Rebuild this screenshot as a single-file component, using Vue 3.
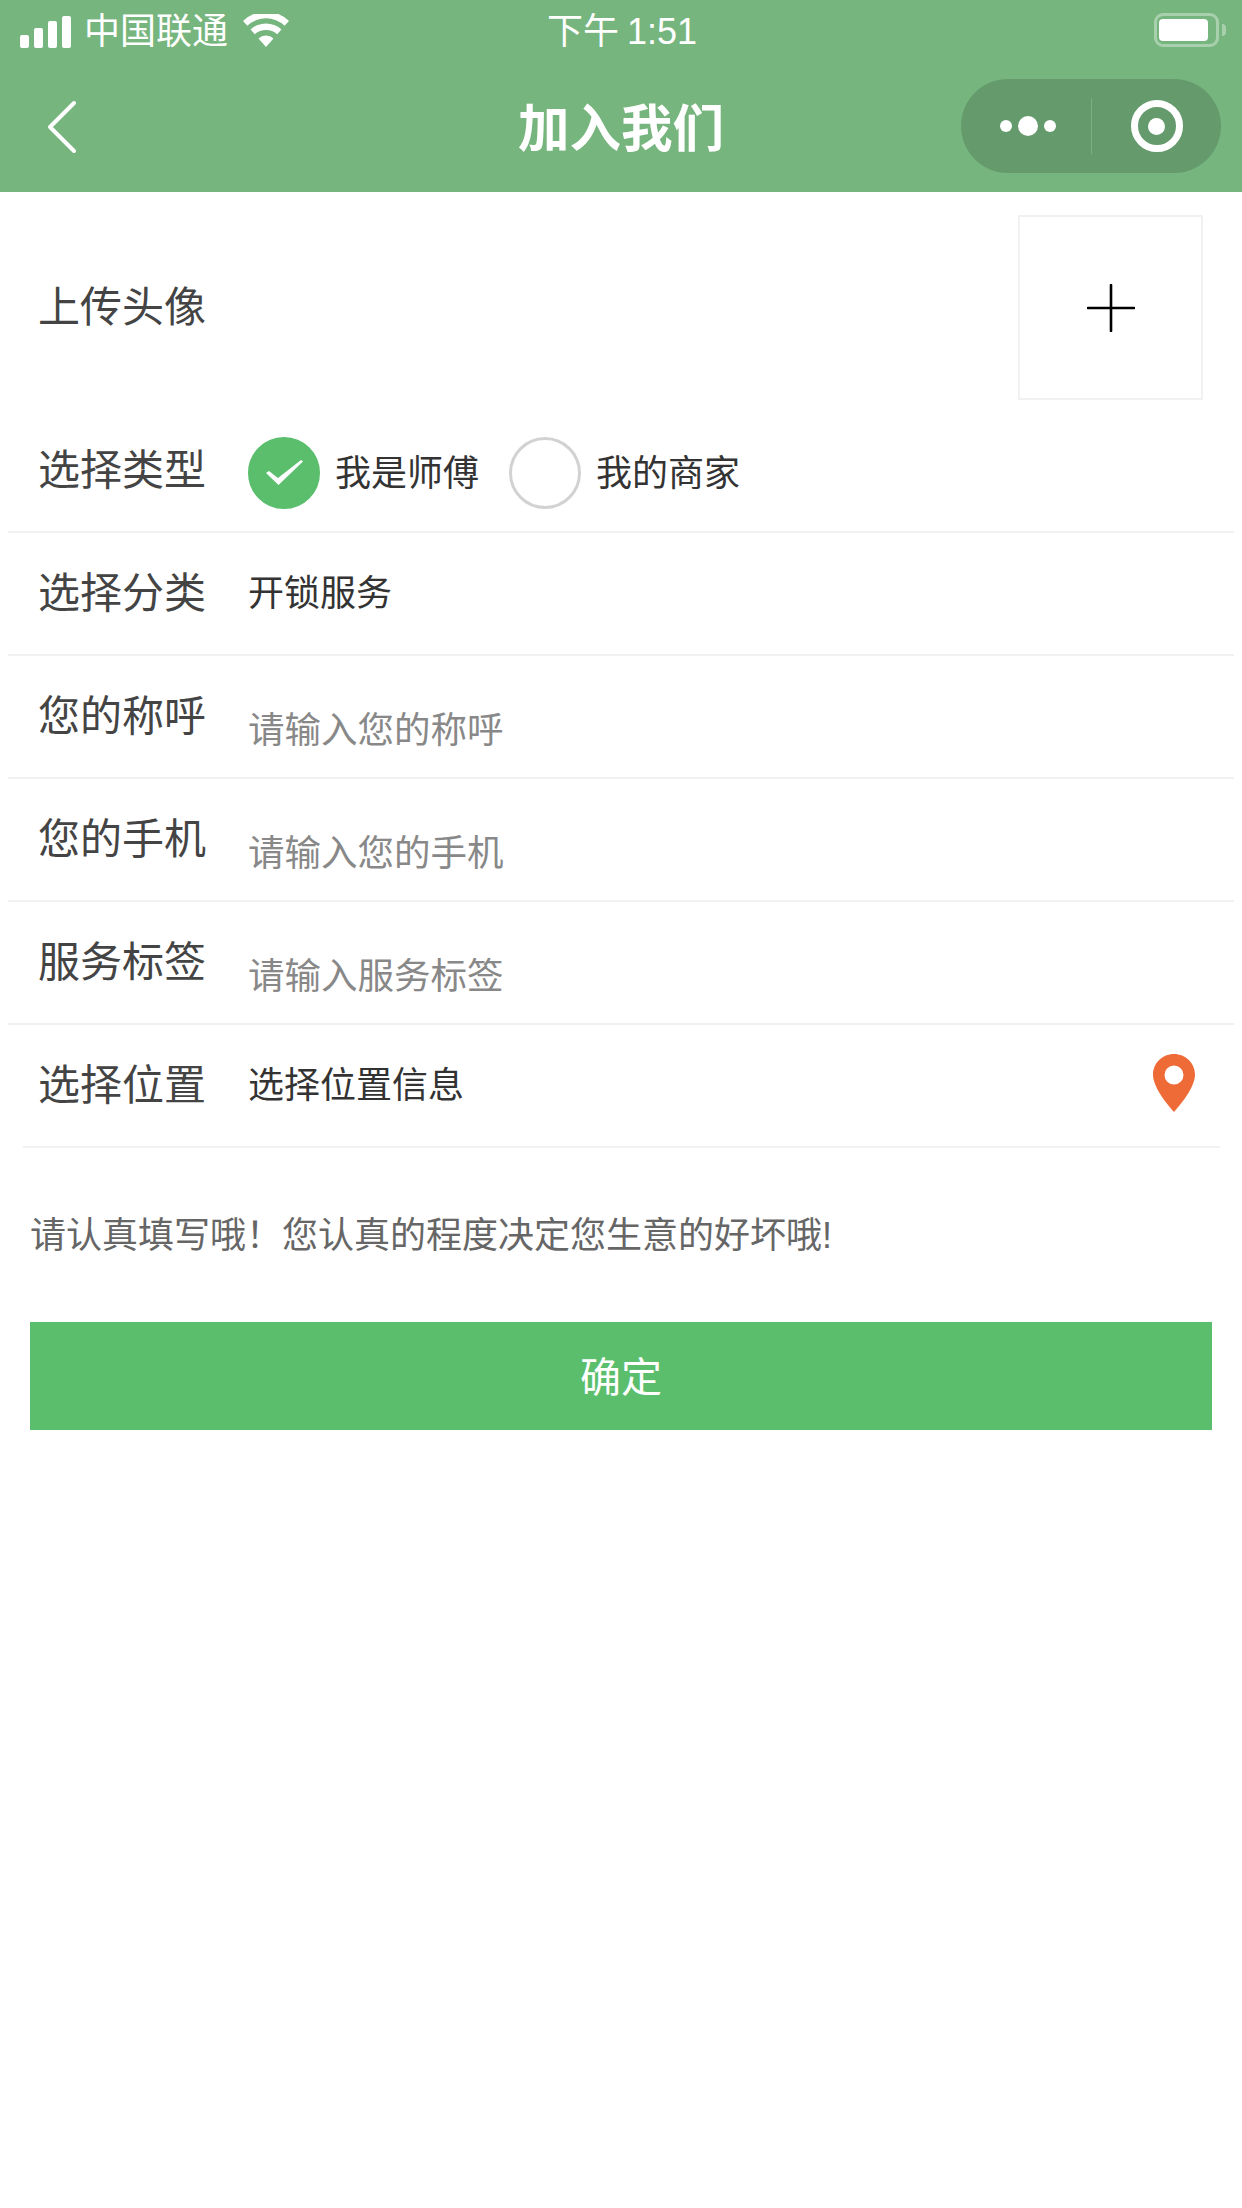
<template>
  <div class="page">
    <header class="top">
      <div class="status">
        <div class="status-left">
          <div class="signal">
            <i v-for="h in barras" :key="h" :style="{ height: h + 'px' }"></i>
          </div>
          <span class="carrier">中国联通</span>
          <svg class="wifi" width="46" height="33" viewBox="0 0 46 33">
            <path d="M23 33 L15.5 24.5 A11 11 0 0 1 30.5 24.5 Z" fill="#fff" />
            <path d="M11.8 20.2 L7.6 15.5 A23 23 0 0 1 38.4 15.5 L34.2 20.2 A17 17 0 0 0 11.8 20.2 Z" fill="#fff" />
            <path d="M4.4 11.8 L0 7 A33 33 0 0 1 46 7 L41.6 11.8 A27 27 0 0 0 4.4 11.8 Z" fill="#fff" />
          </svg>
        </div>
        <span class="time">下午 1:51</span>
        <div class="battery">
          <div class="battery-body"><div class="battery-fill"></div></div>
          <div class="battery-nub"></div>
        </div>
      </div>
      <div class="nav">
        <svg class="back" width="32" height="54" viewBox="0 0 32 54">
          <path d="M28 3 L4 27 L28 51" fill="none" stroke="#fff" stroke-width="4" stroke-linecap="round" stroke-linejoin="round" />
        </svg>
        <h1 class="title">加入我们</h1>
        <div class="capsule">
          <div class="capsule-dots">
            <i class="dot"></i><i class="dot big"></i><i class="dot"></i>
          </div>
          <div class="capsule-line"></div>
          <div class="capsule-target"><div class="ring"><i></i></div></div>
        </div>
      </div>
    </header>

    <main class="form">
      <div class="row upload">
        <span class="label">上传头像</span>
        <div class="upload-box">
          <svg width="48" height="48" viewBox="0 0 48 48">
            <path d="M1 24 H47 M24 1 V47" stroke="#000" stroke-width="2.6" stroke-linecap="round" />
          </svg>
        </div>
      </div>

      <div class="row line">
        <span class="label">选择类型</span>
        <div class="radios">
          <div v-for="t in tipus" :key="t.text" class="radio">
            <span class="circle" :class="{ on: t.actiu }">
              <svg v-if="t.actiu" width="37" height="25" viewBox="0 0 37 25">
                <path d="M0 13 L3 11 L12 18 L35 0 L37 1.5 L12.5 25 Z" fill="#fff" />
              </svg>
            </span>
            <span class="value">{{ t.text }}</span>
          </div>
        </div>
      </div>

      <div class="row line">
        <span class="label">选择分类</span>
        <span class="value">开锁服务</span>
      </div>

      <div v-for="c in camps" :key="c.label" class="row line">
        <span class="label">{{ c.label }}</span>
        <span class="placeholder">{{ c.placeholder }}</span>
      </div>

      <div class="row line last">
        <span class="label">选择位置</span>
        <span class="value grow">选择位置信息</span>
        <svg class="pin" width="42" height="58" viewBox="0 0 42 58">
          <path fill-rule="evenodd" fill="#ee6a37" d="M21 0 C32.6 0 42 9.2 42 20.6 C42 33 29 49 21 58 C13 49 0 33 0 20.6 C0 9.2 9.4 0 21 0 Z M21 11.5 A9.5 9.5 0 1 0 21 30.5 A9.5 9.5 0 1 0 21 11.5 Z" />
        </svg>
      </div>

      <p class="hint">请认真填写哦！您认真的程度决定您生意的好坏哦!</p>
      <button class="confirm">确定</button>
    </main>
  </div>
</template>

<script setup>
const barras = [13, 20, 27, 32]

const tipus = [
  { text: '我是师傅', actiu: true },
  { text: '我的商家', actiu: false },
]

const camps = [
  { label: '您的称呼', placeholder: '请输入您的称呼' },
  { label: '您的手机', placeholder: '请输入您的手机' },
  { label: '服务标签', placeholder: '请输入服务标签' },
]
</script>

<style>
body {
  background: #fff;
}
</style>

<style scoped>
.page {
  width: 1242px;
  height: 2208px;
  background: #fff;
  font-family: "Liberation Sans", "Noto Sans CJK SC", sans-serif;
  overflow: hidden;
}

.top {
  height: 192px;
  background: #77b57f;
  color: #fff;
}

.status {
  height: 64px;
  display: flex;
  align-items: center;
  justify-content: space-between;
  padding: 0 16px 0 20px;
  position: relative;
}

.status-left {
  display: flex;
  align-items: center;
}

.signal {
  display: flex;
  align-items: flex-end;
  gap: 5px;
  height: 32px;
}

.signal i {
  width: 9px;
  background: #fff;
  border-radius: 2px;
}

.carrier {
  font-size: 36px;
  line-height: 40px;
  margin-left: 13px;
}

.wifi {
  margin-left: 15px;
  margin-top: -4px;
}

.time {
  position: absolute;
  left: 547px;
  top: 12px;
  font-size: 36px;
  line-height: 40px;
  word-spacing: -2px;
}

.battery {
  display: flex;
  align-items: center;
  gap: 3px;
  margin-top: -4px;
}

.battery-body {
  width: 65px;
  height: 34px;
  box-sizing: border-box;
  border: 3px solid #a8d0ad;
  border-radius: 9px;
  padding: 3px 8px 3px 2px;
}

.battery-fill {
  height: 100%;
  background: #fff;
  border-radius: 4px;
}

.battery-nub {
  width: 4px;
  height: 12px;
  background: #a8d0ad;
  border-radius: 0 4px 4px 0;
}

.nav {
  height: 128px;
  display: flex;
  align-items: center;
  justify-content: space-between;
  padding: 0 21px 0 46px;
  position: relative;
}

.back {
  margin-top: -3px;
}

.title {
  position: absolute;
  left: 0;
  right: 0;
  top: 31px;
  margin: 0;
  text-align: center;
  font-size: 51.5px;
  line-height: 68px;
  font-weight: 700;
}

.capsule {
  width: 260px;
  height: 94px;
  margin-top: -4px;
  border-radius: 47px;
  background: #659a6c;
  display: flex;
  align-items: center;
  position: relative;
}

.capsule-dots {
  width: 130px;
  display: flex;
  align-items: center;
  justify-content: center;
  gap: 6px;
  padding-left: 4px;
  box-sizing: border-box;
}

.dot {
  width: 12px;
  height: 12px;
  border-radius: 50%;
  background: #fff;
}

.dot.big {
  width: 20px;
  height: 20px;
}

.capsule-line {
  width: 1px;
  height: 56px;
  background: #7dae84;
}

.capsule-target {
  flex: 1;
  display: flex;
  align-items: center;
  justify-content: center;
}

.ring {
  width: 52px;
  height: 52px;
  box-sizing: border-box;
  border: 7px solid #fff;
  border-radius: 50%;
  display: flex;
  align-items: center;
  justify-content: center;
}

.ring i {
  width: 17px;
  height: 17px;
  border-radius: 50%;
  background: #fff;
}

.form {
  padding: 0 8px;
}

.row {
  display: flex;
  align-items: center;
  padding-left: 30px;
}

.line {
  height: 123px;
  box-sizing: border-box;
  border-bottom: 2px solid #f1f1f1;
}

.last {
  margin: 0 14px 0 15px;
  padding-left: 15px;
}

.upload {
  height: 218px;
  box-sizing: border-box;
  padding: 23px 31px 10px 30px;
  justify-content: space-between;
}

.upload-box {
  width: 185px;
  height: 185px;
  box-sizing: border-box;
  border: 2px solid #f1f1f1;
  display: flex;
  align-items: center;
  justify-content: center;
}

.label {
  width: 210px;
  flex-shrink: 0;
  font-size: 42px;
  line-height: 56px;
  color: #444;
}

.value {
  font-size: 36px;
  line-height: 50px;
  color: #333;
}

.grow {
  flex: 1;
}

.placeholder {
  font-size: 36.5px;
  line-height: 50px;
  color: #888;
  margin-top: 28px;
}

.radios {
  display: flex;
  align-items: center;
  gap: 30px;
  margin-top: 3px;
}

.radio {
  display: flex;
  align-items: center;
  gap: 15px;
}

.circle {
  width: 72px;
  height: 72px;
  box-sizing: border-box;
  border: 3px solid #d2d2d2;
  border-radius: 50%;
  display: flex;
  align-items: center;
  justify-content: center;
  margin-top: 1px;
}

.circle.on {
  background: #5abe6d;
  border-color: #5abe6d;
}

.radio .value {
  margin-top: 3px;
}

.pin {
  margin: -6px 25px 0 0;
}

.hint {
  margin: 59px 0 0 22px;
  font-size: 36px;
  line-height: 58px;
  color: #666;
}

.confirm {
  display: block;
  width: 1182px;
  height: 108px;
  margin: 57px 0 0 22px;
  border: 0;
  padding: 0 0 4px;
  background: #5abe6d;
  color: #fff;
  font-family: inherit;
  font-size: 41px;
}
</style>
